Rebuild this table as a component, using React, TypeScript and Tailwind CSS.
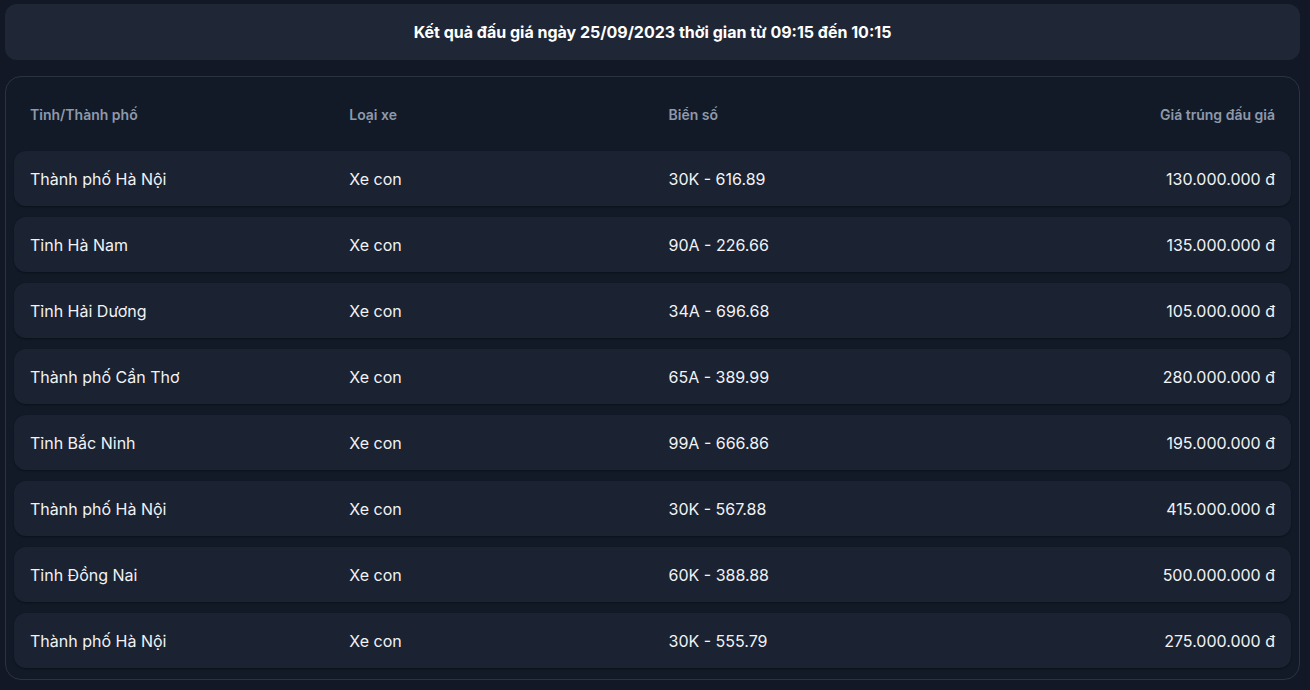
import React from "react";

type Row = {
  tinh: string;
  loai: string;
  bien: string;
  gia: string;
};

const rows: Row[] = [
  { tinh: "Thành phố Hà Nội", loai: "Xe con", bien: "30K - 616.89", gia: "130.000.000 đ" },
  { tinh: "Tỉnh Hà Nam", loai: "Xe con", bien: "90A - 226.66", gia: "135.000.000 đ" },
  { tinh: "Tỉnh Hải Dương", loai: "Xe con", bien: "34A - 696.68", gia: "105.000.000 đ" },
  { tinh: "Thành phố Cần Thơ", loai: "Xe con", bien: "65A - 389.99", gia: "280.000.000 đ" },
  { tinh: "Tỉnh Bắc Ninh", loai: "Xe con", bien: "99A - 666.86", gia: "195.000.000 đ" },
  { tinh: "Thành phố Hà Nội", loai: "Xe con", bien: "30K - 567.88", gia: "415.000.000 đ" },
  { tinh: "Tỉnh Đồng Nai", loai: "Xe con", bien: "60K - 388.88", gia: "500.000.000 đ" },
  { tinh: "Thành phố Hà Nội", loai: "Xe con", bien: "30K - 555.79", gia: "275.000.000 đ" },
];

export default function App() {
  return (
    <main
      className="min-h-screen w-full bg-[#121826] pt-[4px] pl-[5px] pr-[10px] pb-[10px]"
      style={{ fontFamily: "Inter, 'Noto Sans', sans-serif" }}
    >
      {/* tiêu đề */}
      <div className="flex h-[56px] items-center justify-center rounded-xl bg-[#1f2736]">
        <h1 className="text-[16px] font-bold text-white">
          Kết quả đấu giá ngày 25/09/2023 thời gian từ 09:15 đến 10:15
        </h1>
      </div>

      {/* bảng kết quả */}
      <section className="mt-[16px] rounded-2xl border border-[#2b3342] bg-[#121a28] px-[8px] pb-[11px]">
        <div className="grid h-[74px] grid-cols-4 items-center text-[14px] font-semibold text-[#8e99ab]">
          <div className="px-4">Tỉnh/Thành phố</div>
          <div className="px-4">Loại xe</div>
          <div className="px-4">Biển số</div>
          <div className="px-4 text-right">Giá trúng đấu giá</div>
        </div>

        <div className="flex flex-col gap-[11px]">
          {rows.map((r, i) => (
            <div
              key={i}
              className="grid h-[55px] grid-cols-4 items-center rounded-xl bg-[#1b2231] text-[16px] text-[#f1f3f6] shadow-[0_1px_2px_rgba(0,0,0,0.35)]"
            >
              <div className="px-4">{r.tinh}</div>
              <div className="px-4">{r.loai}</div>
              <div className="px-4">{r.bien}</div>
              <div className="px-4 text-right">{r.gia}</div>
            </div>
          ))}
        </div>
      </section>
    </main>
  );
}
